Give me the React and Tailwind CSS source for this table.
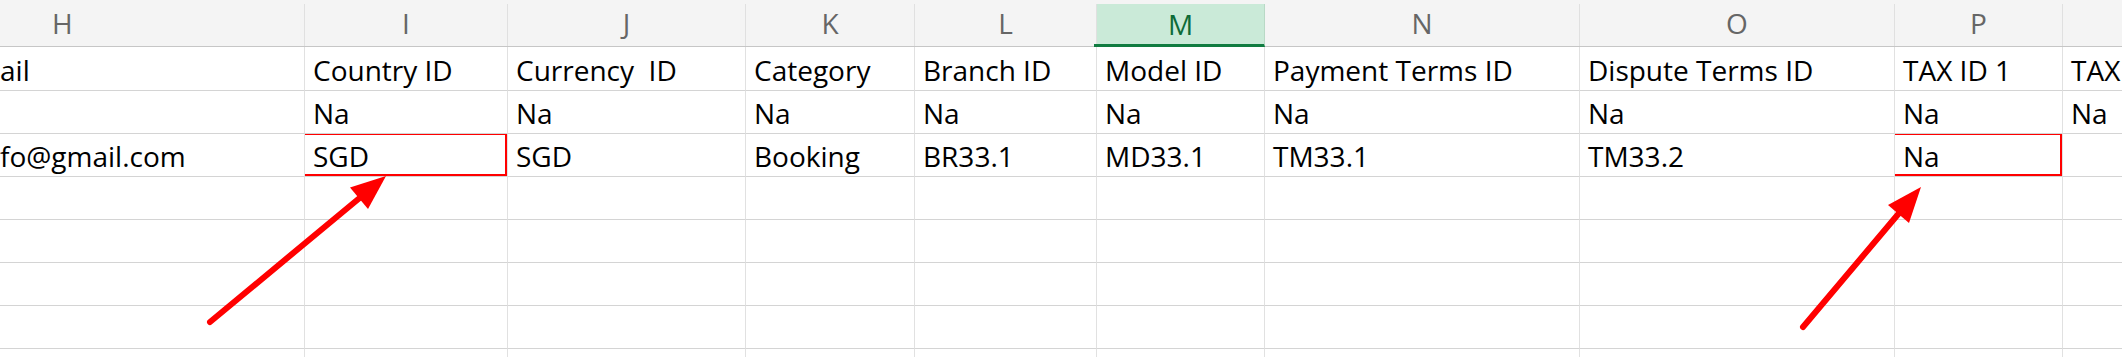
import React from "react";

const cols = [
  { letter: "H", w: "w-[305px]", hdr: "justify-start pl-[52px]" },
  { letter: "I", w: "w-[203px]", hdr: "justify-center" },
  { letter: "J", w: "w-[238px]", hdr: "justify-center" },
  { letter: "K", w: "w-[169px]", hdr: "justify-center" },
  { letter: "L", w: "w-[182px]", hdr: "justify-center" },
  { letter: "M", w: "w-[168px]", hdr: "justify-center", active: true },
  { letter: "N", w: "w-[315px]", hdr: "justify-center" },
  { letter: "O", w: "w-[315px]", hdr: "justify-center" },
  { letter: "P", w: "w-[168px]", hdr: "justify-center" },
  { letter: "", w: "w-[200px]", hdr: "justify-center" },
];

const rows = [
  ["ail", "Country ID", "Currency  ID", "Category", "Branch ID", "Model ID", "Payment Terms ID", "Dispute Terms ID", "TAX ID 1", "TAX"],
  ["", "Na", "Na", "Na", "Na", "Na", "Na", "Na", "Na", "Na"],
  ["fo@gmail.com", "SGD", "SGD", "Booking", "BR33.1", "MD33.1", "TM33.1", "TM33.2", "Na", ""],
  ["", "", "", "", "", "", "", "", "", ""],
  ["", "", "", "", "", "", "", "", "", ""],
  ["", "", "", "", "", "", "", "", "", ""],
  ["", "", "", "", "", "", "", "", "", ""],
  ["", "", "", "", "", "", "", "", "", ""],
];

const boxed = { "2-1": true, "2-8": true };

export default function App() {
  return (
    <div className="relative w-[2122px] h-[357px] overflow-hidden bg-white font-['Open_Sans',sans-serif] text-black">
      {/* column header */}
      <div className="flex h-[47px] pt-[4px] bg-[#f4f4f4] border-b border-[#c6c6c6]">
        {cols.map((c, i) =>
          c.active ? (
            <div
              key={i}
              className={`${c.w} shrink-0 relative z-10 h-[43px] flex items-center ${c.hdr} bg-[#caead8] border-r border-[#b9d9c6] border-b-[3px] border-b-[#107c41] text-[#0e6b38] text-[28px] leading-none`}
            >
              <span className="pb-[1px]">{c.letter}</span>
              <span className="absolute bottom-[-3px] left-[-3px] w-[3px] h-[3px] bg-[#107c41]" />
            </div>
          ) : (
            <div
              key={i}
              className={`${c.w} shrink-0 flex items-center ${c.hdr} border-r border-[#e0e0e0] text-[#666666] text-[28px] leading-none`}
            >
              <span className="pb-[4px]">{c.letter}</span>
            </div>
          )
        )}
      </div>

      {/* grid rows */}
      {rows.map((r, ri) => (
        <div key={ri} className={`flex ${ri === 0 ? "h-[44px]" : "h-[43px]"}`}>
          {r.map((txt, ci) => (
            <div
              key={ci}
              className={`${cols[ci].w} shrink-0 relative flex items-end pl-[8px] pb-[6px] border-r border-r-[#e1e1e1] border-b border-b-[#d4d4d4] text-[28px] leading-none whitespace-pre overflow-hidden`}
            >
              {ci === 0 ? <span className="-ml-[8px]">{txt}</span> : txt}
              {boxed[`${ri}-${ci}`] && (
                <span className="absolute left-[-2px] top-[-1px] right-0 bottom-0 border-2 border-[#ff0000]" />
              )}
            </div>
          ))}
        </div>
      ))}

      {/* annotation arrows */}
      <svg
        className="absolute inset-0 pointer-events-none"
        width="2122"
        height="357"
        viewBox="0 0 2122 357"
      >
        <line x1="210" y1="322" x2="362" y2="196" stroke="#ff0000" strokeWidth="6" strokeLinecap="round" />
        <polygon points="386,176 350,187.5 368,209" fill="#ff0000" />
        <line x1="1803" y1="327" x2="1900" y2="212" stroke="#ff0000" strokeWidth="6" strokeLinecap="round" />
        <polygon points="1921,187 1888,205 1909,223" fill="#ff0000" />
      </svg>
    </div>
  );
}
